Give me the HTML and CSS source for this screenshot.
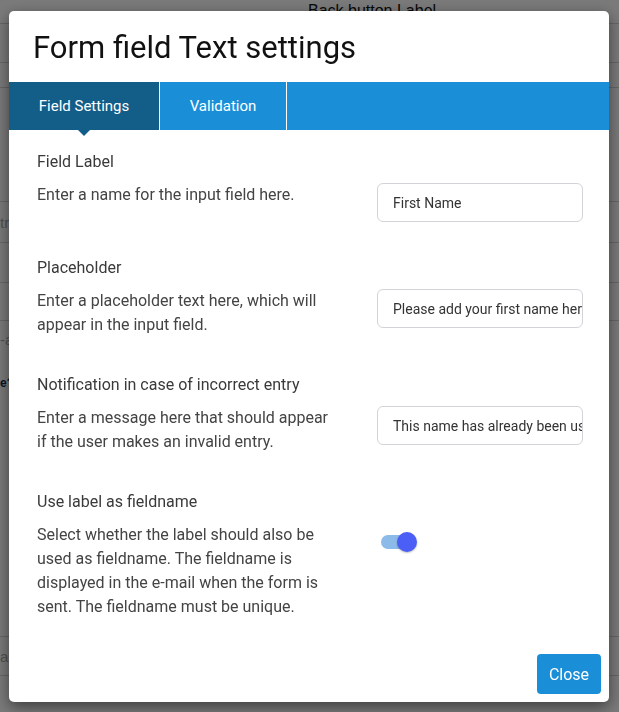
FILE: index.html
```html
<!DOCTYPE html>
<html lang="en">
<head>
<meta charset="utf-8">
<title>Form field Text settings</title>
<link rel="stylesheet" href="styles.css">
</head>
<body>
<div class="page">
  <div class="page-row r1"><span class="back-label">Back button Label</span></div>
  <div class="page-row r2"></div>
  <div class="page-row r3"></div>
  <div class="page-row r4"></div>
  <div class="page-row r5"><span class="frag frag-tr">tr</span></div>
  <div class="page-row r6"></div>
  <div class="page-row r7"></div>
  <div class="page-row r8"><span class="frag frag-a">-a</span><span class="frag frag-q">e?</span></div>
  <div class="page-row r9"><span class="frag frag-a2">a</span></div>
  <div class="page-row r10"></div>
</div>
<div class="overlay"></div>
<div class="modal" role="dialog">
  <header class="modal-header">
    <h1 class="modal-title">Form field Text settings</h1>
  </header>
  <nav class="tabs">
    <a class="tab tab-active">Field Settings</a>
    <a class="tab tab-second">Validation</a>
  </nav>
  <div class="modal-body">
    <section class="field">
      <div class="field-label">Field Label</div>
      <div class="field-row">
        <p class="field-desc">Enter a name for the input field here.</p>
        <input class="field-input" type="text" value="First Name">
      </div>
    </section>
    <section class="field">
      <div class="field-label">Placeholder</div>
      <div class="field-row">
        <p class="field-desc">Enter a placeholder text here, which will appear in the input field.</p>
        <input class="field-input" type="text" value="Please add your first name here">
      </div>
    </section>
    <section class="field">
      <div class="field-label">Notification in case of incorrect entry</div>
      <div class="field-row">
        <p class="field-desc">Enter a message here that should appear if the user makes an invalid entry.</p>
        <input class="field-input" type="text" value="This name has already been used">
      </div>
    </section>
    <section class="field">
      <div class="field-label">Use label as fieldname</div>
      <div class="field-row field-row-switch">
        <p class="field-desc">Select whether the label should also be used as fieldname. The fieldname is displayed in the e-mail when the form is sent. The fieldname must be unique.</p>
        <div class="switch"><span class="switch-track"></span><span class="switch-knob"></span></div>
      </div>
    </section>
  </div>
  <footer class="modal-footer">
    <button class="btn-close" type="button">Close</button>
  </footer>
</div>
</body>
</html>
```
FILE: styles.css
```css
html, body {
  margin: 0;
  padding: 0;
}
body {
  width: 619px;
  height: 712px;
  overflow: hidden;
  background: #fff;
  font-family: Roboto, "Liberation Sans", sans-serif;
}

/* underlying page */
.page {
  display: flex;
  flex-direction: column;
}
.page-row {
  box-sizing: border-box;
  border-bottom: 1px solid #d6d6d6;
  font-family: "Liberation Sans", Arial, sans-serif;
  font-size: 13px;
  color: #333;
  overflow: hidden;
  white-space: nowrap;
}
.r1 { height: 24px; padding: 2px 0 0 308px; color: #111; font-size: 16px; }
.r2 { height: 39px; }
.r3 { height: 25px; }
.r4 { height: 114px; }
.r5 { height: 41px; padding-top: 12px; }
.r6 { height: 40px; }
.r7 { height: 38px; }
.r8 { height: 316px; display: flex; flex-direction: column; }
.r9 { height: 39px; padding-top: 11px; }
.r10 { height: 60px; border-bottom: 0; }
.frag { display: block; }
.frag-tr { color: #aaa; font-size: 15px; }
.frag-a { margin-top: 10px; color: #aaa; font-size: 15px; }
.frag-q { margin-top: 28px; color: #0b2a55; font-weight: bold; font-size: 12px; }
.frag-a2 { color: #aaa; font-size: 15px; }

.overlay {
  position: fixed;
  inset: 0;
  background: rgba(0, 0, 0, 0.52);
}

/* modal */
.modal {
  position: fixed;
  left: 9px;
  top: 11px;
  width: 600px;
  height: 691px;
  background: #fff;
  border-radius: 5px;
  box-shadow: 0 5px 15px rgba(0, 0, 0, 0.5);
  display: flex;
  flex-direction: column;
  overflow: hidden;
}
.modal-header {
  padding: 19px 24px 17px;
}
.modal-title {
  margin: 0;
  font-size: 31px;
  font-weight: 400;
  line-height: 35px;
  color: #111;
}

.tabs {
  display: flex;
  height: 48px;
  background: #1a8fd8;
  position: relative;
  z-index: 1;
}
.tab {
  display: flex;
  align-items: center;
  justify-content: center;
  box-sizing: border-box;
  border-right: 1px solid #fff;
  color: #fff;
  font-size: 15px;
  font-weight: 400;
  position: relative;
}
.tab-active {
  width: 151px;
  background: #135d89;
}
.tab-active::after {
  content: "";
  position: absolute;
  left: 50%;
  bottom: -6px;
  margin-left: -6px;
  border-left: 6px solid transparent;
  border-right: 6px solid transparent;
  border-top: 6px solid #135d89;
}
.tab-second {
  width: 127px;
}

.modal-body {
  flex: 1;
  padding: 20px 26px 0 28px;
  color: #444;
  font-size: 16px;
}
.field + .field {
  margin-top: 34px;
}
.field-label {
  line-height: 24px;
  margin-bottom: 9px;
  color: #3a3a3a;
}
.field-row {
  display: grid;
  grid-template-columns: 1fr 206px;
  column-gap: 40px;
  align-items: start;
}
.field-row-switch {
  margin-top: 3px;
}
.field-desc {
  margin: 0 0 2px;
  line-height: 24px;
}
.field-input {
  width: 206px;
  height: 39px;
  box-sizing: border-box;
  border: 1px solid #d3d3da;
  border-radius: 6px;
  padding: 0 0 0 15px;
  margin: 0;
  font-family: Roboto, "Liberation Sans", sans-serif;
  font-size: 14px;
  color: #333;
  background: #fff;
  outline: none;
}

.switch {
  position: relative;
  width: 36px;
  height: 20px;
  margin: 9px 0 0 4px;
}
.switch-track {
  position: absolute;
  left: 0;
  top: 3px;
  width: 34px;
  height: 14px;
  border-radius: 7px;
  background: #8cbbe9;
}
.switch-knob {
  position: absolute;
  right: 0;
  top: 0;
  width: 20px;
  height: 20px;
  border-radius: 50%;
  background: #4b5ef5;
  box-shadow: 0 1px 2px rgba(0, 0, 0, 0.25);
}

.modal-footer {
  display: flex;
  justify-content: flex-end;
  padding: 0 8px 8px;
}
.btn-close {
  width: 64px;
  height: 40px;
  border: 0;
  border-radius: 4px;
  background: #1a8fd8;
  color: #fff;
  font-family: Roboto, "Liberation Sans", sans-serif;
  font-size: 16px;
  padding: 0;
}
```
